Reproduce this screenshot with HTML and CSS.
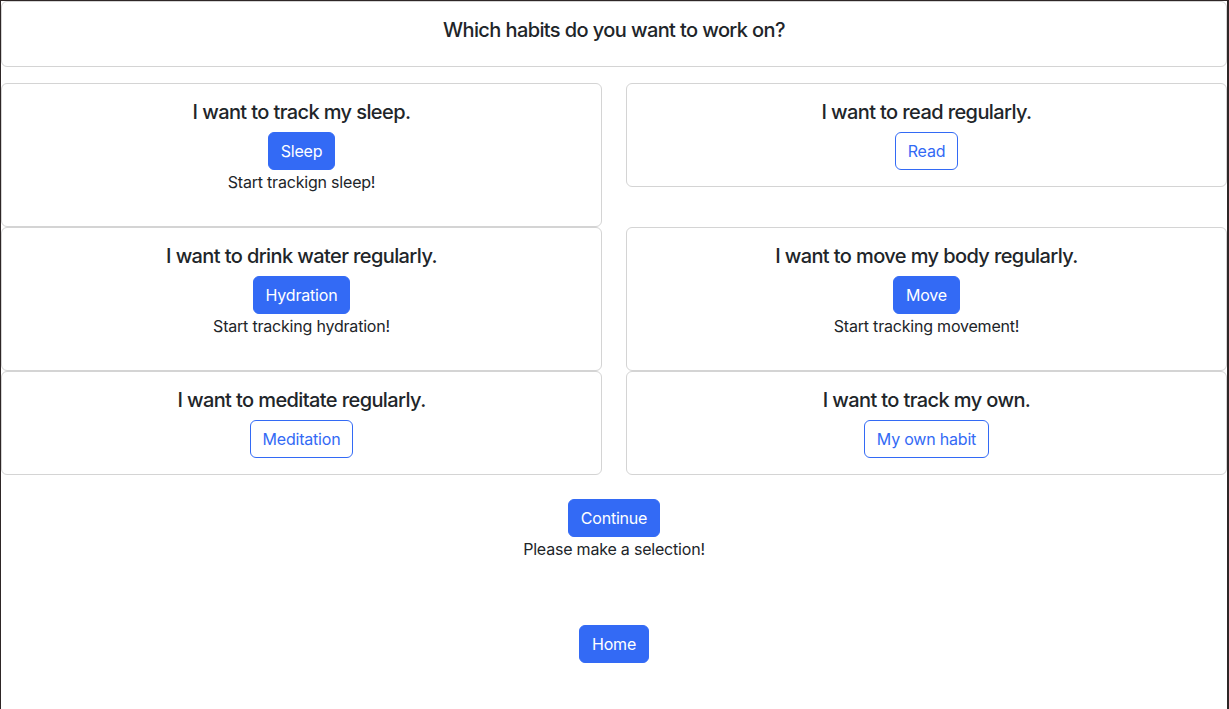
FILE: index.html
```html
<!DOCTYPE html>
<html lang="en">
<head>
<meta charset="utf-8">
<title>Habits</title>
<link rel="stylesheet" href="styles.css">
</head>
<body>
<div class="frame">
  <div class="card header-card">
    <h5 class="card-title">Which habits do you want to work on?</h5>
  </div>

  <div class="habit-grid">
    <div class="card habit">
      <h5 class="card-title">I want to track my sleep.</h5>
      <button class="btn btn-primary">Sleep</button>
      <p class="status">Start trackign sleep!</p>
    </div>
    <div class="card habit">
      <h5 class="card-title">I want to read regularly.</h5>
      <button class="btn btn-outline">Read</button>
    </div>
    <div class="card habit">
      <h5 class="card-title">I want to drink water regularly.</h5>
      <button class="btn btn-primary">Hydration</button>
      <p class="status">Start tracking hydration!</p>
    </div>
    <div class="card habit">
      <h5 class="card-title">I want to move my body regularly.</h5>
      <button class="btn btn-primary">Move</button>
      <p class="status">Start tracking movement!</p>
    </div>
    <div class="card habit">
      <h5 class="card-title">I want to meditate regularly.</h5>
      <button class="btn btn-outline">Meditation</button>
    </div>
    <div class="card habit">
      <h5 class="card-title">I want to track my own.</h5>
      <button class="btn btn-outline">My own habit</button>
    </div>
  </div>

  <div class="continue">
    <button class="btn btn-primary">Continue</button>
    <p class="status">Please make a selection!</p>
  </div>

  <div class="home">
    <button class="btn btn-primary">Home</button>
  </div>
</div>
</body>
</html>
```

FILE: styles.css
```css
html, body {
  margin: 0;
  padding: 0;
  height: 100%;
}

body {
  font-family: Inter, "Liberation Sans", sans-serif;
  font-size: 16px;
  line-height: 1.5;
  letter-spacing: -0.2px;
  color: #212529;
  background: #ffffff;
  box-sizing: border-box;
  border-top: 1px solid #2e2626;
  border-left: 1px solid #2e2626;
  border-right: 2px solid #2e2626;
}

.frame {
  display: flex;
  flex-direction: column;
}

.card {
  border: 1px solid #d4d4d4;
  border-radius: 6px;
  padding: 16px;
  text-align: center;
  background: #fff;
}

.card-title {
  margin: 0 0 8px 0;
  font-size: 20px;
  font-weight: 500;
  line-height: 24px;
  letter-spacing: -0.6px;
}

.habit-grid {
  margin-top: 16px;
  display: grid;
  grid-template-columns: 1fr 1fr;
  column-gap: 24px;
  align-items: start;
}

.habit {
  display: flex;
  flex-direction: column;
  align-items: center;
}

.status {
  margin: 0 0 16px 0;
  line-height: 24px;
}

.btn {
  font-family: inherit;
  font-size: 16px;
  line-height: 24px;
  letter-spacing: -0.2px;
  padding: 6px 12px;
  border-radius: 6px;
  border: 1px solid transparent;
  cursor: pointer;
  font-weight: 400;
}

.btn-primary {
  background: #336af5;
  border-color: #336af5;
  color: #fff;
}

.btn-outline {
  background: #fff;
  border-color: #336af5;
  color: #336af5;
}

.continue {
  margin-top: 24px;
  display: flex;
  flex-direction: column;
  align-items: center;
}

.home {
  margin-top: 48px;
  display: flex;
  justify-content: center;
}
```
